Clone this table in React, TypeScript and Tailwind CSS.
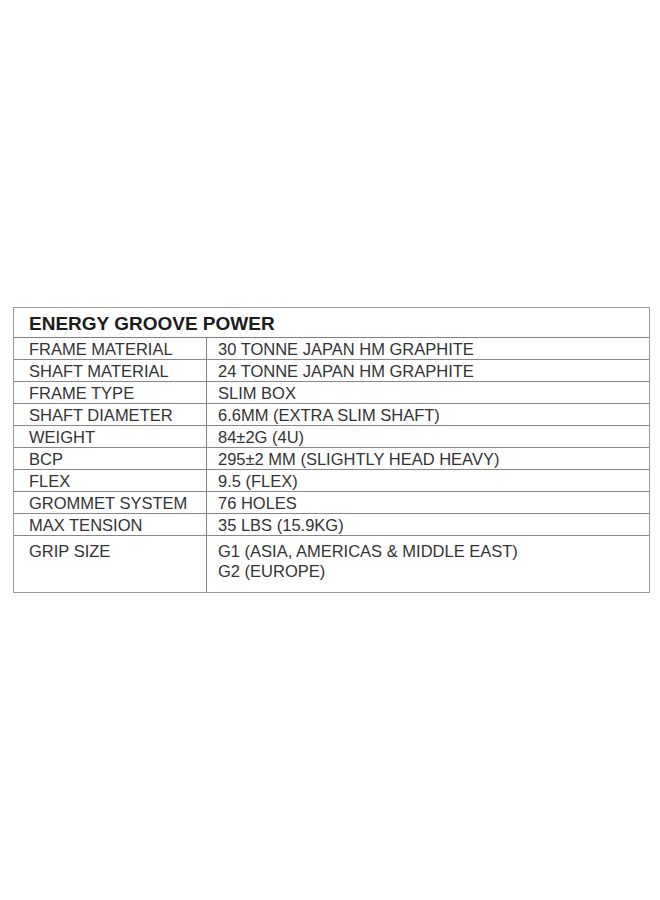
const rows: [string, string[]][] = [
  ["FRAME MATERIAL", ["30 TONNE JAPAN HM GRAPHITE"]],
  ["SHAFT MATERIAL", ["24 TONNE JAPAN HM GRAPHITE"]],
  ["FRAME TYPE", ["SLIM BOX"]],
  ["SHAFT DIAMETER", ["6.6MM (EXTRA SLIM SHAFT)"]],
  ["WEIGHT", ["84±2G (4U)"]],
  ["BCP", ["295±2 MM (SLIGHTLY HEAD HEAVY)"]],
  ["FLEX", ["9.5 (FLEX)"]],
  ["GROMMET SYSTEM", ["76 HOLES"]],
  ["MAX TENSION", ["35 LBS (15.9KG)"]],
];

export default function App() {
  return (
    <main
      className="w-[660px] h-[900px] bg-white pt-[307px] pl-[13px]"
      style={{ fontFamily: '"Liberation Sans", Arial, sans-serif' }}
    >
      <div className="w-[637px] border border-[#9a9a9a] text-[#333] text-[16.5px]">
        <div className="h-[30px] flex items-center pl-[15px] pt-[3px] border-b border-[#808080] text-[19px] font-bold text-[#1c1c1c]">
          ENERGY GROOVE POWER
        </div>
        {rows.map(([label, value]) => (
          <div key={label} className="grid grid-cols-[193px_1fr] h-[22px] border-b border-[#888]">
            <div className="flex items-center pl-[15px] pt-px border-r border-[#808080] leading-none">{label}</div>
            <div className="flex items-center pl-[11px] pt-px leading-none">{value[0]}</div>
          </div>
        ))}
        <div className="grid grid-cols-[193px_1fr] h-[56px]">
          <div className="pl-[15px] pt-[5px] border-r border-[#808080] leading-[20px]">GRIP SIZE</div>
          <div className="pl-[11px] pt-[5px] leading-[20px]">
            <div>G1 (ASIA, AMERICAS &amp; MIDDLE EAST)</div>
            <div>G2 (EUROPE)</div>
          </div>
        </div>
      </div>
    </main>
  );
}
